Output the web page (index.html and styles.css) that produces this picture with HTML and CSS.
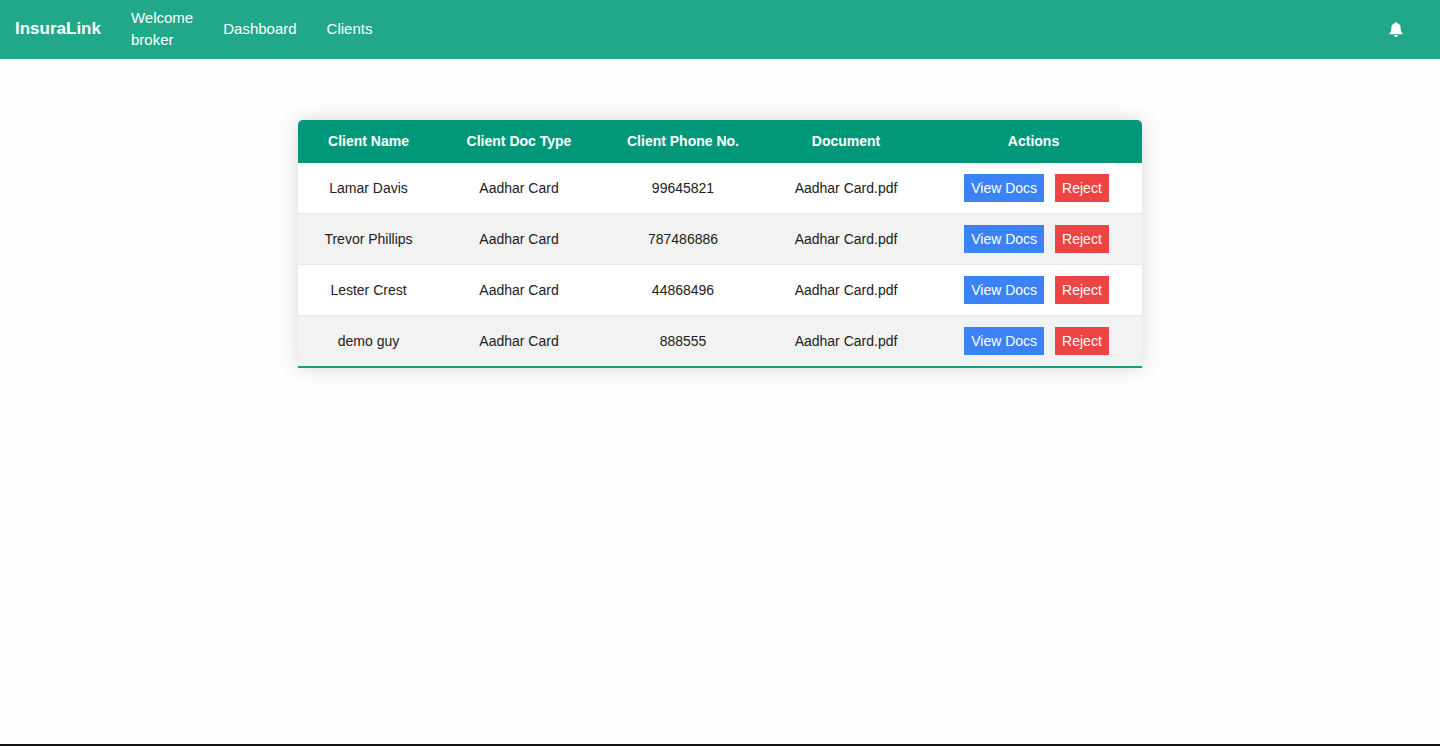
FILE: index.html
```html
<!DOCTYPE html>
<html lang="en">
<head>
<meta charset="utf-8">
<meta name="viewport" content="width=device-width, initial-scale=1">
<title>InsuraLink</title>
<link rel="stylesheet" href="styles.css">
</head>
<body>
<header class="navbar">
  <a class="brand" href="#">InsuraLink</a>
  <nav class="nav-links">
    <span class="welcome">Welcome broker</span>
    <a href="#">Dashboard</a>
    <a href="#">Clients</a>
  </nav>
  <button class="bell" type="button" aria-label="Notifications">
    <svg viewBox="0 0 42 45" aria-hidden="true"><path fill="currentColor" d="M21 0c-2 0-3 1-3 3-7 2-11 7-11 14 0 9-1 13-6 17v3h40v-3c-5-4-6-8-6-17 0-7-4-12-11-14 0-2-1-3-3-3zM15 39c1 4 3 6 6 6s5-2 6-6z"/></svg>
  </button>
</header>
<main class="content">
  <table class="clients">
    <colgroup>
      <col class="col-name"><col class="col-type"><col class="col-phone"><col class="col-doc"><col class="col-actions">
    </colgroup>
    <thead>
      <tr><th scope="col">Client Name</th><th scope="col">Client Doc Type</th><th scope="col">Client Phone No.</th><th scope="col">Document</th><th scope="col">Actions</th></tr>
    </thead>
    <tbody>
      <tr><td>Lamar Davis</td><td>Aadhar Card</td><td>99645821</td><td>Aadhar Card.pdf</td><td><div class="actions"><button class="btn view" type="button">View Docs</button><button class="btn reject" type="button">Reject</button></div></td></tr>
      <tr><td>Trevor Phillips</td><td>Aadhar Card</td><td>787486886</td><td>Aadhar Card.pdf</td><td><div class="actions"><button class="btn view" type="button">View Docs</button><button class="btn reject" type="button">Reject</button></div></td></tr>
      <tr><td>Lester Crest</td><td>Aadhar Card</td><td>44868496</td><td>Aadhar Card.pdf</td><td><div class="actions"><button class="btn view" type="button">View Docs</button><button class="btn reject" type="button">Reject</button></div></td></tr>
      <tr><td>demo guy</td><td>Aadhar Card</td><td>888555</td><td>Aadhar Card.pdf</td><td><div class="actions"><button class="btn view" type="button">View Docs</button><button class="btn reject" type="button">Reject</button></div></td></tr>
    </tbody>
  </table>
</main>
</body>
</html>
```
FILE: styles.css
```css
* {
  box-sizing: border-box;
}

body {
  margin: 0;
  min-height: 100vh;
  display: flex;
  flex-direction: column;
  background: #fefefe;
  border-bottom: 2px solid #111;
  color: #212121;
  font-family: "Liberation Sans", Arial, sans-serif;
  font-size: 14px;
}

.navbar {
  display: flex;
  align-items: center;
  gap: 30px;
  padding: 7px 37px 8px 15px;
  background: #20a888;
  color: #fff;
  font-size: 15px;
  line-height: 22px;
}

.navbar a {
  color: inherit;
  text-decoration: none;
}

.navbar .brand {
  font-size: 17px;
  font-weight: bold;
}

.nav-links {
  display: flex;
  align-items: center;
  gap: 30px;
}

.welcome {
  width: min-content;
}

.bell {
  margin-left: auto;
  padding: 0;
  border: 0;
  background: none;
  color: inherit;
  line-height: 0;
}

.bell svg {
  width: 14px;
  height: 15px;
}

.content {
  padding: 61px 16px;
}

.clients {
  width: 100%;
  max-width: 844px;
  margin: 0 auto;
  table-layout: fixed;
  border-collapse: separate;
  border-spacing: 0;
  border-radius: 5px 5px 0 0;
  overflow: hidden;
  background: #fff;
  box-shadow: 0 0 20px rgba(0, 0, 0, 0.15);
  text-align: center;
  line-height: 20px;
}

.col-name { width: 141px; }
.col-type { width: 160px; }
.col-phone { width: 168px; }
.col-doc { width: 158px; }
.col-actions { width: 217px; }

.clients th {
  padding: 11px 8px;
  background: #009879;
  border-bottom: 1px solid #129176;
  color: #fff;
}

.clients td {
  padding: 11px 8px;
  border-bottom: 1px solid #e8e8e8;
}

.clients tbody tr:nth-child(even) {
  background: #f2f2f2;
}

.clients tbody tr:last-child td {
  border-bottom: 2px solid #229a7f;
}

.actions {
  display: flex;
  justify-content: center;
  gap: 11px;
  padding-left: 6px;
}

.btn {
  padding: 4px 7px;
  border: 0;
  color: #fff;
  font: inherit;
  line-height: 20px;
}

.view { background: #3b82f6; }
.reject { background: #ef4444; }
```
